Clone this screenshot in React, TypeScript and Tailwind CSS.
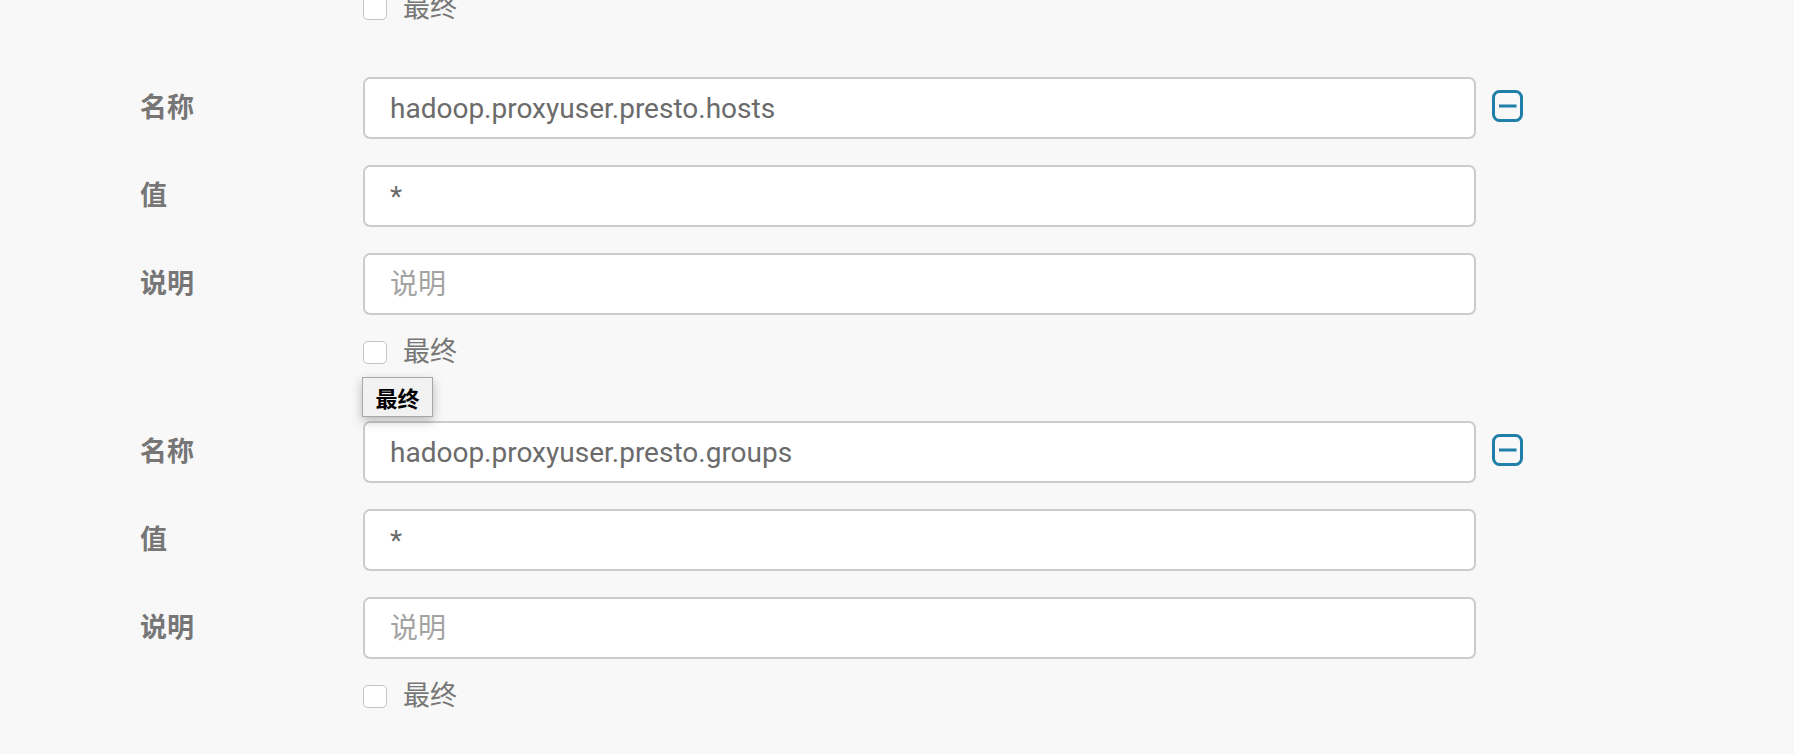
import React from 'react';

type Prop = { name: string; value: string; desc: string; final: boolean };

const props: Prop[] = [
  { name: 'hadoop.proxyuser.presto.hosts', value: '*', desc: '', final: false },
  { name: 'hadoop.proxyuser.presto.groups', value: '*', desc: '', final: false },
];

const MinusBox = () => (
  <svg width="32" height="32" viewBox="0 0 32 32" fill="none" className="text-[#1f7fa9]">
    <rect x="1.5" y="1.5" width="28" height="29" rx="6" stroke="currentColor" strokeWidth="3" />
    <line x1="7" y1="16" x2="24.5" y2="16" stroke="currentColor" strokeWidth="3" />
  </svg>
);

const Field: React.FC<{ label: string; value?: string; placeholder?: string; removable?: boolean }> = ({ label, value, placeholder, removable }) => (
  <div className="flex items-center h-[62px]">
    <label className="w-[363px] pl-[140px] shrink-0 text-[27px] font-bold text-[#767676] font-['Roboto','Noto_Sans_CJK_SC',sans-serif] whitespace-nowrap">
      {label}
    </label>
    <input
      readOnly
      value={value ?? ''}
      placeholder={placeholder}
      className="w-[1113px] h-[62px] px-[25px] bg-white border-2 border-[#cccccc] rounded-[7px] text-[28px] text-[#6b6b6b] placeholder:text-[#a3a3a3] outline-none font-['Roboto','Noto_Sans_CJK_SC',sans-serif]"
    />
    {removable && (
      <div className="ml-[16px] -mt-[4px]">
        <MinusBox />
      </div>
    )}
  </div>
);

const FinalCheck: React.FC<{ tooltip?: boolean }> = ({ tooltip }) => (
  <div className="relative flex items-center h-[24px] pl-[363px]">
    <span className="w-[24px] h-[23px] rounded-[5px] border-[1.5px] border-[#c4c4c4] bg-white shrink-0"></span>
    <span className="ml-[16px] text-[27px] text-[#777] font-['Roboto','Noto_Sans_CJK_SC',sans-serif] leading-none">最终</span>
    {tooltip && (
      <div className="absolute top-[37px] left-[362px] w-[71px] h-[40px] flex items-center justify-center bg-[#f2f2f2] border border-[#a8a8a8] shadow-[0_4px_10px_rgba(0,0,0,0.25)] text-[22px] font-bold text-black font-['Noto_Sans_CJK_SC',sans-serif]">
        最终
      </div>
    )}
  </div>
);

export default function App() {
  return (
    <div className="w-[1794px] h-[754px] overflow-hidden bg-[#f8f8f8] flex flex-col">
      <div className="-mt-[4px]">
        <FinalCheck />
      </div>
      {props.map((p, i) => (
        <div key={p.name} className="flex flex-col mt-[57px]">
          <div className="flex flex-col gap-[26px]">
            <Field label="名称" value={p.name} removable />
            <Field label="值" value={p.value} />
            <Field label="说明" value={p.desc} placeholder="说明" />
          </div>
          <div className="mt-[25px]">
            <FinalCheck tooltip={i === 0} />
          </div>
        </div>
      ))}
    </div>
  );
}
